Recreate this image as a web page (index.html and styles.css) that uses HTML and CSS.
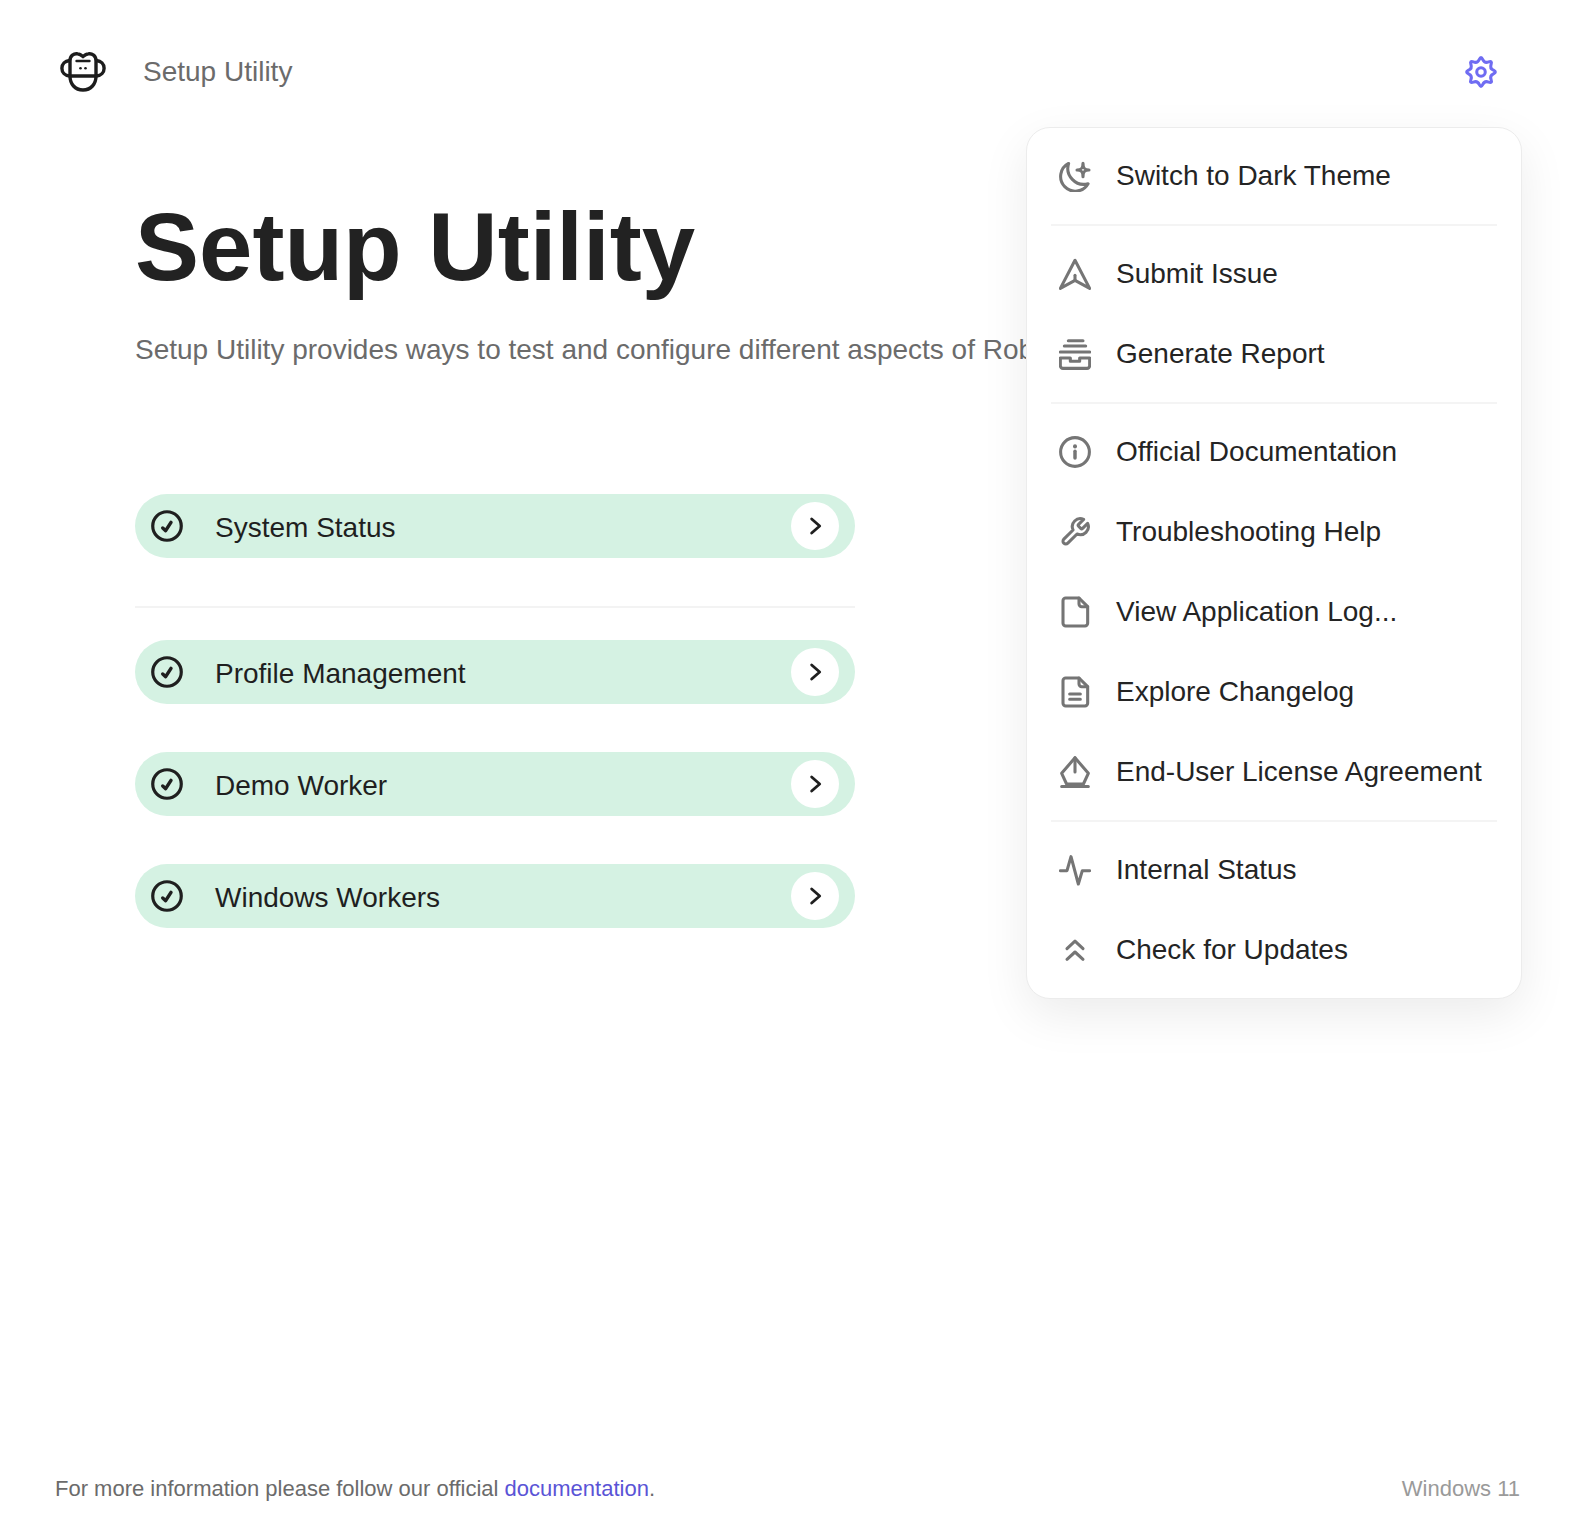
FILE: index.html
```html
<!DOCTYPE html>
<html lang="en">
<head>
<meta charset="utf-8">
<title>Setup Utility</title>
<link rel="stylesheet" href="styles.css">
</head>
<body>
<div class="page">
  <header class="topbar">
    <div class="brand">
      <svg class="logo" viewBox="0 0 46 40" fill="none" stroke="#1d1d1d" stroke-width="3.400" stroke-linecap="round" stroke-linejoin="round">
        <path d="M10 24V8.500C10 3.500 14 1.300 17.500 1.800 20 2 21.500 3.200 23 4.600 24.500 3.200 26 2 28.500 1.800 32 1.300 36 3.500 36 8.500V24"/>
        <path d="M10 24C10 32 15 38 23 38S36 32 36 24Z"/>
        <path d="M9.500 8.500C5 9 1.900 12 1.900 16.300S5 23.700 9.500 24"/>
        <path d="M36.500 8.500C41 9 44.100 12 44.100 16.300S41 23.700 36.500 24"/>
        <path d="M16.500 9H29.500" stroke-width="2.400"/>
        <circle class="eye" cx="20.500" cy="16.300" r="1.300"/>
        <circle class="eye" cx="25.500" cy="16.300" r="1.300"/>
      </svg>
      <span class="brand-name">Setup Utility</span>
    </div>
    <svg class="gear" viewBox="0 0 24 24" fill="none" stroke="#6f6cf2" stroke-width="2.300" stroke-linejoin="round">
      <path d="M21.335 10.660Q24.200 12 21.335 13.340T19.550 17.655T17.655 19.550T13.340 21.335T10.660 21.335T6.345 19.550T4.450 17.655T2.665 13.340T2.665 10.660T4.450 6.345T6.345 4.450T10.660 2.665T13.340 2.665T17.655 4.450T19.550 6.345T21.335 10.660Z"/>
      <circle cx="12" cy="12" r="3.200"/>
    </svg>
  </header>

  <main class="content">
    <h1 class="title">Setup Utility</h1>
    <p class="subtitle">Setup Utility provides ways to test and configure different aspects of Robocorp Workforce Agent.</p>

    <div class="rows">
      <div class="row">
        <svg class="check" viewBox="0 0 24 24" fill="none" stroke="#1f1f1f" stroke-width="2.400" stroke-linecap="round" stroke-linejoin="round"><circle cx="12" cy="12" r="10.700"/><path d="M8.800 13.500L11 15.500L15 9.300" stroke-width="2.600"/></svg>
        <span class="row-label">System Status</span>
        <span class="go"><svg class="chev" viewBox="0 0 24 24" fill="none" stroke="#1f1f1f" stroke-width="3.400" stroke-linecap="round" stroke-linejoin="round"><path d="M8 3.600L17.600 12L8 20.400"/></svg></span>
      </div>
      <hr class="rows-divider">
      <div class="row">
        <svg class="check" viewBox="0 0 24 24" fill="none" stroke="#1f1f1f" stroke-width="2.400" stroke-linecap="round" stroke-linejoin="round"><circle cx="12" cy="12" r="10.700"/><path d="M8.800 13.500L11 15.500L15 9.300" stroke-width="2.600"/></svg>
        <span class="row-label">Profile Management</span>
        <span class="go"><svg class="chev" viewBox="0 0 24 24" fill="none" stroke="#1f1f1f" stroke-width="3.400" stroke-linecap="round" stroke-linejoin="round"><path d="M8 3.600L17.600 12L8 20.400"/></svg></span>
      </div>
      <div class="row">
        <svg class="check" viewBox="0 0 24 24" fill="none" stroke="#1f1f1f" stroke-width="2.400" stroke-linecap="round" stroke-linejoin="round"><circle cx="12" cy="12" r="10.700"/><path d="M8.800 13.500L11 15.500L15 9.300" stroke-width="2.600"/></svg>
        <span class="row-label">Demo Worker</span>
        <span class="go"><svg class="chev" viewBox="0 0 24 24" fill="none" stroke="#1f1f1f" stroke-width="3.400" stroke-linecap="round" stroke-linejoin="round"><path d="M8 3.600L17.600 12L8 20.400"/></svg></span>
      </div>
      <div class="row">
        <svg class="check" viewBox="0 0 24 24" fill="none" stroke="#1f1f1f" stroke-width="2.400" stroke-linecap="round" stroke-linejoin="round"><circle cx="12" cy="12" r="10.700"/><path d="M8.800 13.500L11 15.500L15 9.300" stroke-width="2.600"/></svg>
        <span class="row-label">Windows Workers</span>
        <span class="go"><svg class="chev" viewBox="0 0 24 24" fill="none" stroke="#1f1f1f" stroke-width="3.400" stroke-linecap="round" stroke-linejoin="round"><path d="M8 3.600L17.600 12L8 20.400"/></svg></span>
      </div>
    </div>
  </main>

  <footer class="footer">
    <span>For more information please follow our official <a class="link" href="#">documentation</a>.</span>
    <span class="os">Windows 11</span>
  </footer>

  <nav class="menu">
    <div class="item">
      <svg class="ico" viewBox="0 0 24 24"><path d="M7.200 2.600A11 11 0 1 0 21.800 17.800A12 12 0 0 1 7.200 2.600Z"/><path d="M18 2.500C18 6 19 7.500 22.500 7.500C19 7.500 18 9 18 12.500C18 9 17 7.500 13.500 7.500C17 7.500 18 6 18 2.500Z"/></svg>
      <span>Switch to Dark Theme</span>
    </div>
    <hr class="sep">
    <div class="item">
      <svg class="ico" viewBox="0 0 24 24"><path d="M12 1.700L1 22.800L12 16.800L23 22.800Z"/><path d="M12 16.800V13"/></svg>
      <span>Submit Issue</span>
    </div>
    <div class="item">
      <svg class="ico" viewBox="0 0 24 24"><path d="M7 2H18M4 6H20M1 10.500H23"/><path d="M1 15H8.500V17.500H15.500V15H23V20.800A2 2 0 0 1 21 22.800H3A2 2 0 0 1 1 20.800Z"/></svg>
      <span>Generate Report</span>
    </div>
    <hr class="sep">
    <div class="item">
      <svg class="ico" viewBox="0 0 24 24"><circle cx="12" cy="12" r="10.800"/><path d="M12 11.500V16.500" stroke-width="2.600"/><path d="M12 7.600V7.800" stroke-width="3"/></svg>
      <span>Official Documentation</span>
    </div>
    <div class="item">
      <svg class="ico" viewBox="0 0 24 24"><path d="M14.700 6.300a1 1 0 0 0 0 1.400l1.600 1.600a1 1 0 0 0 1.400 0l3.770-3.770a6 6 0 0 1-7.940 7.940l-6.910 6.910a2.120 2.120 0 0 1-3-3l6.910-6.910a6 6 0 0 1 7.940-7.940l-3.760 3.760z"/></svg>
      <span>Troubleshooting Help</span>
    </div>
    <div class="item">
      <svg class="ico" viewBox="0 0 24 24"><path d="M5 1.500H15L21.500 8V20.500A2 2 0 0 1 19.500 22.500H5A2 2 0 0 1 3 20.500V3.500A2 2 0 0 1 5 1.500Z"/><path d="M15 1.500V6A2 2 0 0 0 17 8H21.500"/></svg>
      <span>View Application Log...</span>
    </div>
    <div class="item">
      <svg class="ico" viewBox="0 0 24 24"><path d="M5 1.500H15L21.500 8V20.500A2 2 0 0 1 19.500 22.500H5A2 2 0 0 1 3 20.500V3.500A2 2 0 0 1 5 1.500Z"/><path d="M15 1.500V6A2 2 0 0 0 17 8H21.500"/><path d="M8 13.500H16M8 17.500H16"/></svg>
      <span>Explore Changelog</span>
    </div>
    <div class="item">
      <svg class="ico" viewBox="0 0 24 24"><path d="M12 1.300L22 13L18.300 21H5.700L2 13Z"/><path d="M12 1.300V12M2 22.900H22"/></svg>
      <span>End-User License Agreement</span>
    </div>
    <hr class="sep">
    <div class="item">
      <svg class="ico" viewBox="0 0 24 24"><path d="M1 12.500H6L9 2L14.500 22.500L17.500 12.500H23"/></svg>
      <span>Internal Status</span>
    </div>
    <div class="item">
      <svg class="ico" viewBox="0 0 24 24"><path d="M6 11L12 5.300L18 11M6 19L12 13.500L18 19"/></svg>
      <span>Check for Updates</span>
    </div>
  </nav>
</div>
</body>
</html>
```
FILE: styles.css
```css
* { box-sizing: border-box; }
html, body { margin: 0; padding: 0; background: #fff; }
body { font-family: "Liberation Sans", Arial, sans-serif; color: #1f1f1f; }
.page { position: relative; height: 1536px; display: flex; flex-direction: column; overflow: hidden; }

.topbar { display: flex; justify-content: space-between; align-items: center; height: 144px; padding: 0 79px 0 60px; flex: none; }
.brand { display: flex; align-items: center; gap: 37px; }
.logo { width: 46px; height: 40px; display: block; }
.eye { fill: #1d1d1d; stroke: none; }
.brand-name { font-size: 28px; line-height: 36px; color: #6b6b6b; }
.gear { width: 32px; height: 32px; display: block; }

.content { flex: 1; padding: 55px 0 0 135px; min-width: 0; }
.title { margin: 0; font-size: 96px; line-height: 96px; font-weight: 700; color: #222; }
.subtitle { width: 892px; margin: 37px 0 0; font-size: 28px; line-height: 36px; color: #6b6b6b; white-space: nowrap; overflow: hidden; }

.rows { width: 720px; margin-top: 126px; display: flex; flex-direction: column; gap: 48px; }
.row { height: 64px; border-radius: 32px; background: #d5f2e3; display: flex; align-items: center; padding: 0 16px; }
.check { width: 32px; height: 32px; flex: none; }
.row-label { flex: 1; margin-left: 32px; padding-top: 4px; font-size: 28px; line-height: 36px; color: #1f1f1f; }
.go { width: 48px; height: 48px; border-radius: 50%; background: #fff; display: flex; align-items: center; justify-content: center; flex: none; }
.chev { width: 20px; height: 20px; display: block; }
.rows-divider { width: 100%; height: 2px; margin: 0 0 -16px; border: 0; background: #f3f3f3; }

.footer { display: flex; justify-content: space-between; align-items: center; height: 48px; margin-bottom: 23px; padding: 0 56px 0 55px; font-size: 22px; line-height: 28px; color: #6b6b6b; flex: none; }
.link { color: #5a54d6; text-decoration: none; }
.os { color: #9a9a9a; }

.menu { position: absolute; left: 1026px; top: 127px; width: 496px; height: 872px; padding: 16px 24px; background: #fff; border: 1px solid #ececec; border-radius: 24px; box-shadow: 0 16px 48px rgba(0, 0, 0, .08); display: flex; flex-direction: column; gap: 16px; }
.item { height: 64px; flex: none; display: flex; align-items: center; gap: 25px; padding-left: 8px; font-size: 28px; line-height: 36px; color: #242424; white-space: nowrap; }
.ico { width: 32px; height: 32px; flex: none; fill: none; stroke: #757575; stroke-width: 2.300; stroke-linecap: round; stroke-linejoin: round; }
.sep { width: 100%; height: 2px; margin: 0; border: 0; background: #f4f4f4; flex: none; }
```
